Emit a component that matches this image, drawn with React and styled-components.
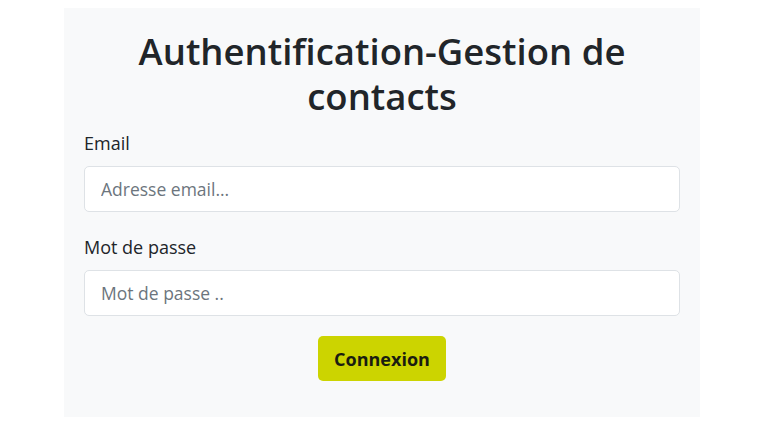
import React from "react";
import styled, { createGlobalStyle } from "styled-components";

const Global = createGlobalStyle`
  html, body { margin: 0; padding: 0; background: #fff; }
  body { font-family: "Open Sans", "Noto Sans", sans-serif; color: #212529; }
  * { box-sizing: border-box; }
`;

const Page = styled.div`
  padding: 8px 0 0 64px;
`;

const Panel = styled.form`
  width: 636px;
  height: 409px;
  background: #f8f9fa;
  padding: 21px 20px 0;
  display: flex;
  flex-direction: column;
`;

const Title = styled.h1`
  margin: 0 0 12px;
  font-size: 36.5px;
  line-height: 45px;
  font-weight: 600;
  text-align: center;
  color: #212529;
`;

const Field = styled.div`
  display: flex;
  flex-direction: column;
  margin-bottom: ${(p) => p.$mb || 0}px;
`;

const Label = styled.label`
  font-size: 18px;
  line-height: 24px;
  margin: 0 0 11px;
`;

const Input = styled.input`
  height: 46px;
  width: 100%;
  border: 1px solid #dee2e6;
  border-radius: 5px;
  background: #fff;
  padding: 0 16px;
  font-family: inherit;
  font-size: 17.5px;
  color: #212529;
  &::placeholder { color: #6c757d; }
`;

const ButtonRow = styled.div`
  display: flex;
  justify-content: center;
  margin-top: 20px;
`;

const Button = styled.button`
  width: 128px;
  height: 45px;
  border: none;
  border-radius: 5px;
  background: #ccd400;
  font-family: inherit;
  font-weight: 700;
  font-size: 18px;
  color: #1a1d10;
`;

export default function App() {
  return (
    <>
      <Global />
      <Page>
        <Panel onSubmit={(e) => e.preventDefault()}>
          <Title>Authentification-Gestion de contacts</Title>
          <Field $mb={23}>
            <Label>Email</Label>
            <Input type="email" placeholder="Adresse email..." />
          </Field>
          <Field>
            <Label>Mot de passe</Label>
            <Input type="password" placeholder="Mot de passe .." />
          </Field>
          <ButtonRow>
            <Button type="submit">Connexion</Button>
          </ButtonRow>
        </Panel>
      </Page>
    </>
  );
}
